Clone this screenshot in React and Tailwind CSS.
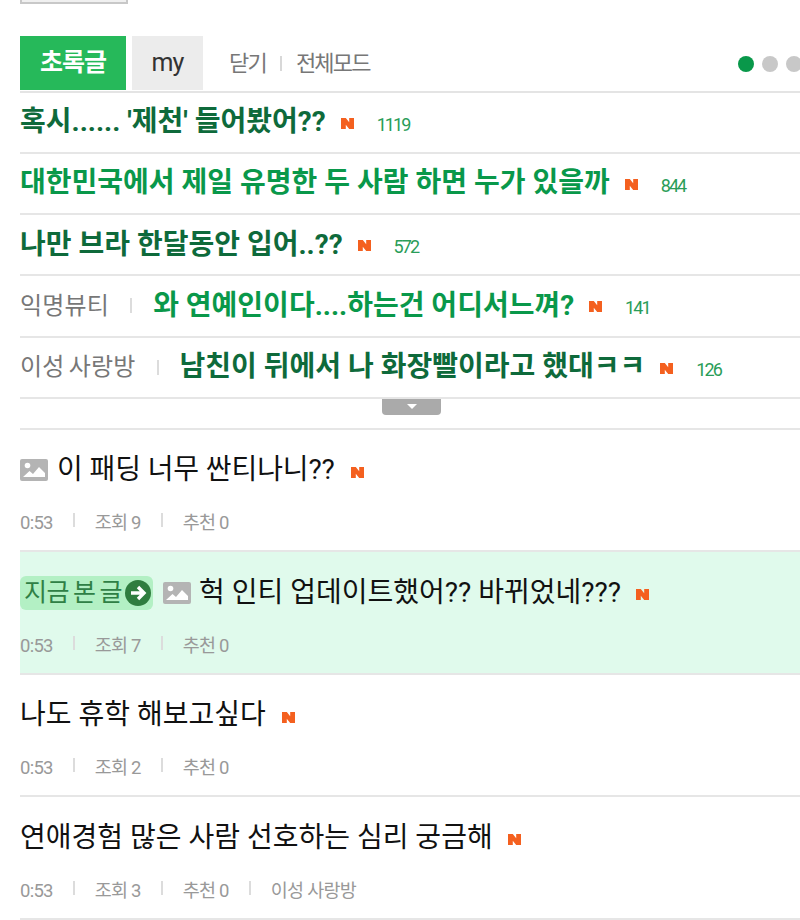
const FONT = "font-['Roboto','Noto_Sans_CJK_KR',sans-serif]";

function NewIcon({ className = "" }) {
  return (
    <svg viewBox="0 0 13 11" className={`w-[13px] h-[11px] shrink-0 ${className}`}>
      <path d="M0 0h4.8l3.4 4.2V0H13v11H8.2L4.8 6.8V11H0z" fill="#f4601f" />
    </svg>
  );
}

function ImgIcon() {
  return (
    <svg viewBox="0 0 28 22" className="w-[28px] h-[22px] shrink-0">
      <rect x="0" y="0" width="28" height="22" rx="2" fill="#b4b4b4" />
      <circle cx="7.5" cy="6.5" r="2.8" fill="#fff" />
      <path d="M3 18l6.5-6 3.5 3 6-7 6 6v4z" fill="#fff" />
    </svg>
  );
}

const hot = [
  { t: "혹시...... '제천' 들어봤어??", n: "1119", c: "text-[#0e6a3b]" },
  { t: "대한민국에서 제일 유명한 두 사람 하면 누가 있을까", n: "844", c: "text-[#09984a]" },
  { t: "나만 브라 한달동안 입어..??", n: "572", c: "text-[#0e6a3b]" },
  { b: "익명뷰티", t: "와 연예인이다....하는건 어디서느껴?", n: "141", c: "text-[#09984a]" },
  { b: "이성 사랑방", t: "남친이 뒤에서 나 화장빨이라고 했대ㅋㅋ", n: "126", c: "text-[#0e6a3b]" },
];

function Meta({ v, extra }) {
  const Sep = () => <span className="w-[2px] h-[14px] bg-[#dcdcdc] -translate-y-[3px]" />;
  return (
    <div className="flex items-center gap-[20px] text-[18.5px] tracking-[-0.75px] text-[#999999] leading-[24px]">
      <span>0:53</span>
      <Sep />
      <span>조회 {v}</span>
      <Sep />
      <span>추천 0</span>
      {extra && (
        <>
          <Sep />
          <span>{extra}</span>
        </>
      )}
    </div>
  );
}

function Post({ children, v, extra, active }) {
  return (
    <div className={`h-[122.6px] border-b-2 border-[#e6e6e6] flex flex-col pt-[23.5px] ${active ? "bg-[#e0faec]" : ""}`}>
      <div className="h-[34px] flex items-center text-[28px] text-[#111111] whitespace-nowrap">{children}</div>
      <div className="mt-[24px]">
        <Meta v={v} extra={extra} />
      </div>
    </div>
  );
}

export default function App() {
  return (
    <div className={`${FONT} w-[800px] h-[920px] overflow-hidden bg-white pl-[20px]`}>
      <div className="w-[108px] h-[4px] bg-[#f0f0f0] border-x-2 border-b-2 border-[#c8c8c8]" />
      <div className="h-[32px]" />
      <div className="h-[56.5px] flex border-b-2 border-[#e4e4e4]">
        <div className="w-[106px] h-[54px] bg-[#26b95a] text-white font-bold text-[25px] tracking-[-1px] flex items-center justify-center">초록글</div>
        <div className="ml-[6px] w-[71px] h-[54px] bg-[#ececec] text-[#333333] text-[25px] tracking-[-1px] flex items-center justify-center">my</div>
        <div className="ml-[26px] h-[54px] flex items-center text-[22px] tracking-[-1.8px] text-[#777777]">
          <span>닫기</span>
          <span className="mx-[14px] w-[2px] h-[15px] bg-[#d8d8d8]" />
          <span>전체모드</span>
        </div>
        <div className="ml-auto h-[54px] flex items-center gap-[8px] -mr-[2px] translate-y-px">
          <span className="w-[16px] h-[16px] rounded-full bg-[#09984a]" />
          <span className="w-[16px] h-[16px] rounded-full bg-[#c8c8c8]" />
          <span className="w-[16px] h-[16px] rounded-full bg-[#c8c8c8]" />
        </div>
      </div>
      {hot.map((r, i) => (
        <div key={i} className="h-[61.25px] border-b-2 border-[#e6e6e6] flex items-center whitespace-nowrap">
          {r.b && (
            <>
              <span className="text-[24px] tracking-[0.2px] [word-spacing:-2px] text-[#777777]">{r.b}</span>
              <span className="mx-[21px] w-[2px] h-[15px] bg-[#dcdcdc]" />
            </>
          )}
          <span className={`text-[28px] font-bold ${r.c}`}>{r.t}</span>
          <NewIcon className="ml-[15px] translate-y-[1px]" />
          <span className="ml-[23px] text-[18px] tracking-[-1.9px] text-[#2a9d58] translate-y-[2px]">{r.n}</span>
        </div>
      ))}
      <div className="h-[30.75px] border-b-2 border-[#e6e6e6]">
        <div className="ml-[362px] w-[59px] h-[16px] bg-[#aaaaaa] rounded-b-[4px] flex items-center justify-center">
          <span className="w-0 h-0 border-x-[5px] border-x-transparent border-t-[5px] border-t-white" />
        </div>
      </div>
      <Post v="9">
        <ImgIcon />
        <span className="ml-[9px] tracking-[-0.1px]">이 패딩 너무 싼티나니??</span>
        <NewIcon className="ml-[16px] translate-y-[2px]" />
      </Post>
      <Post v="7" active>
        <span className="flex items-center h-[34px] w-[133px] bg-[#b3f0c4] rounded-[6px] text-[25px] text-[#2f8045] pl-[4px] font-normal [word-spacing:-2px]">
          <span className="tracking-[-0.4px]">지금 본 글</span>
          <svg viewBox="0 0 26 26" className="w-[26px] h-[26px] shrink-0 ml-[3px]">
            <circle cx="13" cy="13" r="13" fill="#2f7d3f" />
            <path d="M6 13h12M13 7l6 6-6 6" fill="none" stroke="#fff" strokeWidth="3.4" />
          </svg>
        </span>
        <span className="ml-[10px] flex"><ImgIcon /></span>
        <span className="ml-[8px]">헉 인티 업데이트했어?? 바뀌었네???</span>
        <NewIcon className="ml-[15px] translate-y-[2px]" />
      </Post>
      <Post v="2">
        <span>나도 휴학 해보고싶다</span>
        <NewIcon className="ml-[16px] translate-y-[2px]" />
      </Post>
      <Post v="3" extra="이성 사랑방">
        <span>연애경험 많은 사람 선호하는 심리 궁금해</span>
        <NewIcon className="ml-[15px] translate-y-[2px]" />
      </Post>
    </div>
  );
}
